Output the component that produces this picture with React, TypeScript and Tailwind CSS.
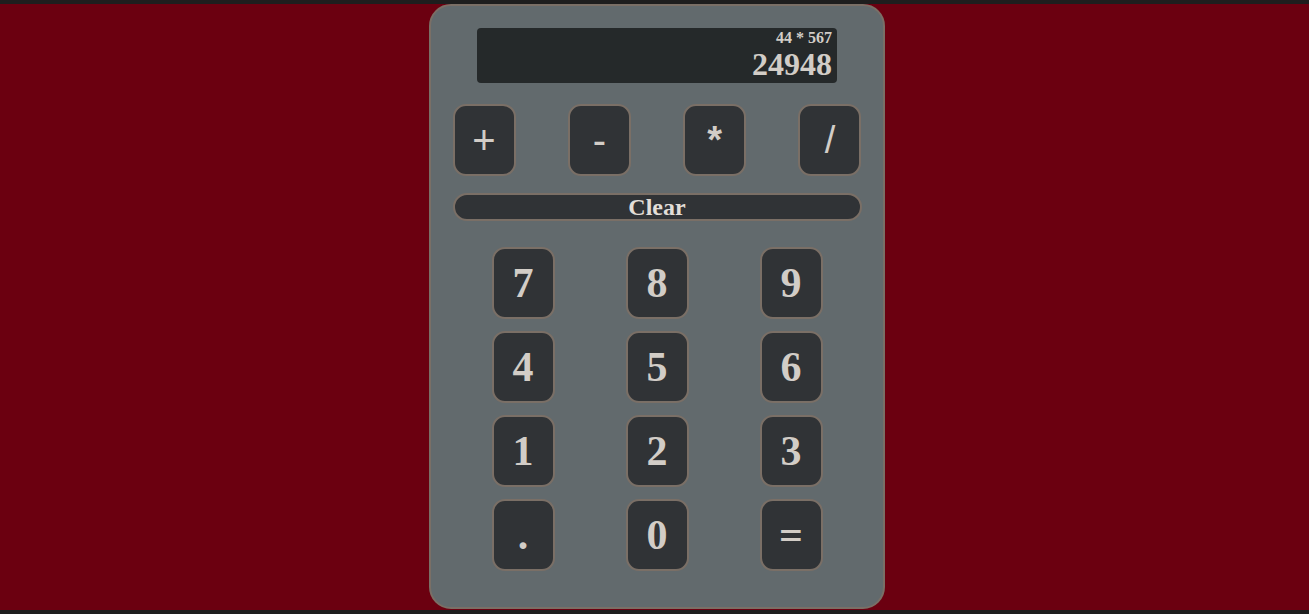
import React from "react";

const serif = { fontFamily: '"Liberation Serif", "Times New Roman", serif' };
const sans = { fontFamily: '"Liberation Sans", Arial, sans-serif' };

function Key({ label, cls = "font-bold text-[42px]", font = serif }: { label: string; cls?: string; font?: React.CSSProperties }) {
  return (
    <button
      className={`w-[63px] h-[72px] rounded-[13px] border-2 border-[#7a6f66] bg-[#303336] text-[#d2cdc7] flex items-center justify-center leading-none ${cls}`}
      style={font}
    >
      {label}
    </button>
  );
}

export default function App() {
  const rows = [
    ["7", "8", "9"],
    ["4", "5", "6"],
    ["1", "2", "3"],
    [".", "0", "="],
  ];
  return (
    <div className="h-[614px] w-full bg-[#6b0010] border-t-4 border-b-4 border-[#1e1e1e] flex justify-center pl-[5px]" style={serif}>
      <div className="w-[456px] h-[605px] rounded-[22px] border-2 border-[#7a6f66] bg-[#626a6d] flex flex-col items-center pt-[22px] px-[21px]">
        <div className="w-[360px] h-[55px] rounded-[4px] bg-[#25292a] flex flex-col items-end pr-[5px] pt-[1px] text-[#d2cdc7] font-bold">
          <div className="text-[16px] leading-[18px]">44 * 567</div>
          <div className="text-[32px] leading-[34px]">24948</div>
        </div>
        <div className="w-[409px] flex justify-between mt-[21px]">
          <Key label="+" font={sans} cls="font-normal text-[40px]" />
          <Key label="-" font={sans} cls="font-normal text-[40px]" />
          <Key label="*" font={sans} cls="font-bold text-[38px]" />
          <Key label="/" font={sans} cls="font-normal text-[38px]" />
        </div>
        <button className="mt-[17px] w-[409px] h-[28px] rounded-full border-2 border-[#7a6f66] bg-[#303336] text-[#e2ded8] font-bold text-[24px] leading-none flex items-center justify-center" style={serif}>
          Clear
        </button>
        <div className="mt-[26px] grid grid-cols-3 gap-x-[71px] gap-y-[12px] w-[331px]">
          {rows.flat().map((k) => (
            <Key key={k} label={k} />
          ))}
        </div>
      </div>
    </div>
  );
}
